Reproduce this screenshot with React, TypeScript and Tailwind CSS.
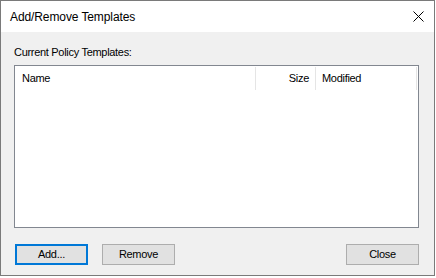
import React from "react";

const font = { fontFamily: '"Liberation Sans", Arial, sans-serif' };

const Btn = ({ label, focused }: { label: string; focused?: boolean }) => (
  <button
    className={
      "w-[73px] h-[21px] bg-[#e1e1e1] text-[11px] tracking-[-0.3px] leading-none text-black flex items-center justify-center " +
      (focused ? "border-2 border-[#0078d7]" : "border border-[#adadad]")
    }
  >
    {label}
  </button>
);

const App = () => {
  return (
    <div className="w-[436px] h-[278px] bg-white" style={font}>
      <div className="w-[435px] h-[276px] border border-[#7a7a7a] flex flex-col bg-[#f0f0f0]">
        <div className="h-[31px] bg-white flex items-center justify-between pl-[9px] pr-[10px] shrink-0">
          <span className="text-[12px] tracking-[-0.1px] text-black">Add/Remove Templates</span>
          <svg width="11" height="11" viewBox="0 0 11 11" className="text-black">
            <path d="M0.5 0.5 L10.5 10.5 M10.5 0.5 L0.5 10.5" stroke="currentColor" strokeWidth="1" />
          </svg>
        </div>
        <div className="flex-1 flex flex-col pl-[13px] pr-[15px] pt-[13px]">
          <div className="text-[11px] leading-[14px] tracking-[-0.3px] text-black">Current Policy Templates:</div>
          <div className="mt-[6px] w-[405px] h-[163px] border border-[#828790] bg-white">
            <div className="flex h-[24px] pt-[1px] text-[11px] tracking-[-0.3px] text-black">
              <div className="w-[241px] border-r border-[#e5e5e5] pl-[7px] flex items-center">Name</div>
              <div className="w-[60px] border-r border-[#e5e5e5] pr-[6px] flex items-center justify-end">Size</div>
              <div className="w-[101px] border-r border-[#e5e5e5] pl-[6px] flex items-center">Modified</div>
            </div>
          </div>
          <div className="mt-[16px] flex">
            <div className="ml-[1px]">
              <Btn label="Add..." focused />
            </div>
            <div className="ml-[14px]">
              <Btn label="Remove" />
            </div>
            <div className="ml-auto">
              <Btn label="Close" />
            </div>
          </div>
        </div>
      </div>
    </div>
  );
};

export default App;
